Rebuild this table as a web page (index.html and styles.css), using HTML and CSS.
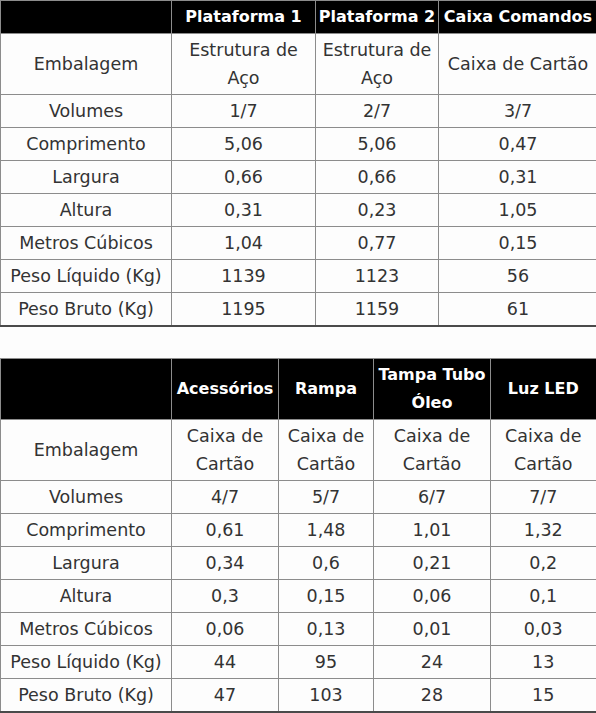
FILE: index.html
```html
<!DOCTYPE html>
<html lang="pt">
<head>
<meta charset="utf-8">
<link rel="stylesheet" href="styles.css">
</head>
<body>
<table class="spec spec-one">
  <colgroup>
    <col class="c-label"><col class="c1a"><col class="c1b"><col class="c1c">
  </colgroup>
  <thead>
    <tr><th></th><th>Plataforma 1</th><th>Plataforma 2</th><th>Caixa Comandos</th></tr>
  </thead>
  <tbody>
    <tr><td>Embalagem</td><td>Estrutura de Aço</td><td>Estrutura de Aço</td><td>Caixa de Cartão</td></tr>
    <tr><td>Volumes</td><td>1/7</td><td>2/7</td><td>3/7</td></tr>
    <tr><td>Comprimento</td><td>5,06</td><td>5,06</td><td>0,47</td></tr>
    <tr><td>Largura</td><td>0,66</td><td>0,66</td><td>0,31</td></tr>
    <tr><td>Altura</td><td>0,31</td><td>0,23</td><td>1,05</td></tr>
    <tr><td>Metros Cúbicos</td><td>1,04</td><td>0,77</td><td>0,15</td></tr>
    <tr><td>Peso Líquido (Kg)</td><td>1139</td><td>1123</td><td>56</td></tr>
    <tr><td>Peso Bruto (Kg)</td><td>1195</td><td>1159</td><td>61</td></tr>
  </tbody>
</table>

<table class="spec spec-two">
  <colgroup>
    <col class="c-label"><col class="c2a"><col class="c2b"><col class="c2c"><col class="c2d">
  </colgroup>
  <thead>
    <tr><th></th><th>Acessórios</th><th>Rampa</th><th>Tampa Tubo Óleo</th><th>Luz LED</th></tr>
  </thead>
  <tbody>
    <tr><td>Embalagem</td><td>Caixa de Cartão</td><td>Caixa de Cartão</td><td>Caixa de Cartão</td><td>Caixa de Cartão</td></tr>
    <tr><td>Volumes</td><td>4/7</td><td>5/7</td><td>6/7</td><td>7/7</td></tr>
    <tr><td>Comprimento</td><td>0,61</td><td>1,48</td><td>1,01</td><td>1,32</td></tr>
    <tr><td>Largura</td><td>0,34</td><td>0,6</td><td>0,21</td><td>0,2</td></tr>
    <tr><td>Altura</td><td>0,3</td><td>0,15</td><td>0,06</td><td>0,1</td></tr>
    <tr><td>Metros Cúbicos</td><td>0,06</td><td>0,13</td><td>0,01</td><td>0,03</td></tr>
    <tr><td>Peso Líquido (Kg)</td><td>44</td><td>95</td><td>24</td><td>13</td></tr>
    <tr><td>Peso Bruto (Kg)</td><td>47</td><td>103</td><td>28</td><td>15</td></tr>
  </tbody>
</table>
</body>
</html>
```

FILE: styles.css
```css
html, body {
  margin: 0;
  padding: 0;
  background: #fdfdfd;
}

body {
  font-family: "DejaVu Sans", "Liberation Sans", sans-serif;
  font-size: 16px;
  color: #333333;
}

.spec {
  border-collapse: collapse;
  table-layout: fixed;
  width: 597px;
}

.spec-one {
  margin-bottom: 31px;
  border-bottom: 2px solid #4a4a4a;
}

.spec-two {
  width: 596px;
  border-right: 2px solid #4a4a4a;
  border-bottom: 2px solid #4a4a4a;
}

.spec th,
.spec td {
  border: 1px solid #8c8c8c;
  padding: 2px 3px;
  line-height: 28px;
  text-align: center;
  vertical-align: middle;
}

.spec td {
  font-size: 17.5px;
}

.spec th {
  background: #000000;
  color: #ffffff;
  font-weight: bold;
  padding: 2px 0;
}

.c-label { width: 171px; }
.c1a { width: 144px; }
.c1b { width: 123px; }
.c1c { width: 159px; }

.c2a { width: 107px; }
.c2b { width: 95px; }
.c2c { width: 117px; }
.c2d { width: 106px; }
```
